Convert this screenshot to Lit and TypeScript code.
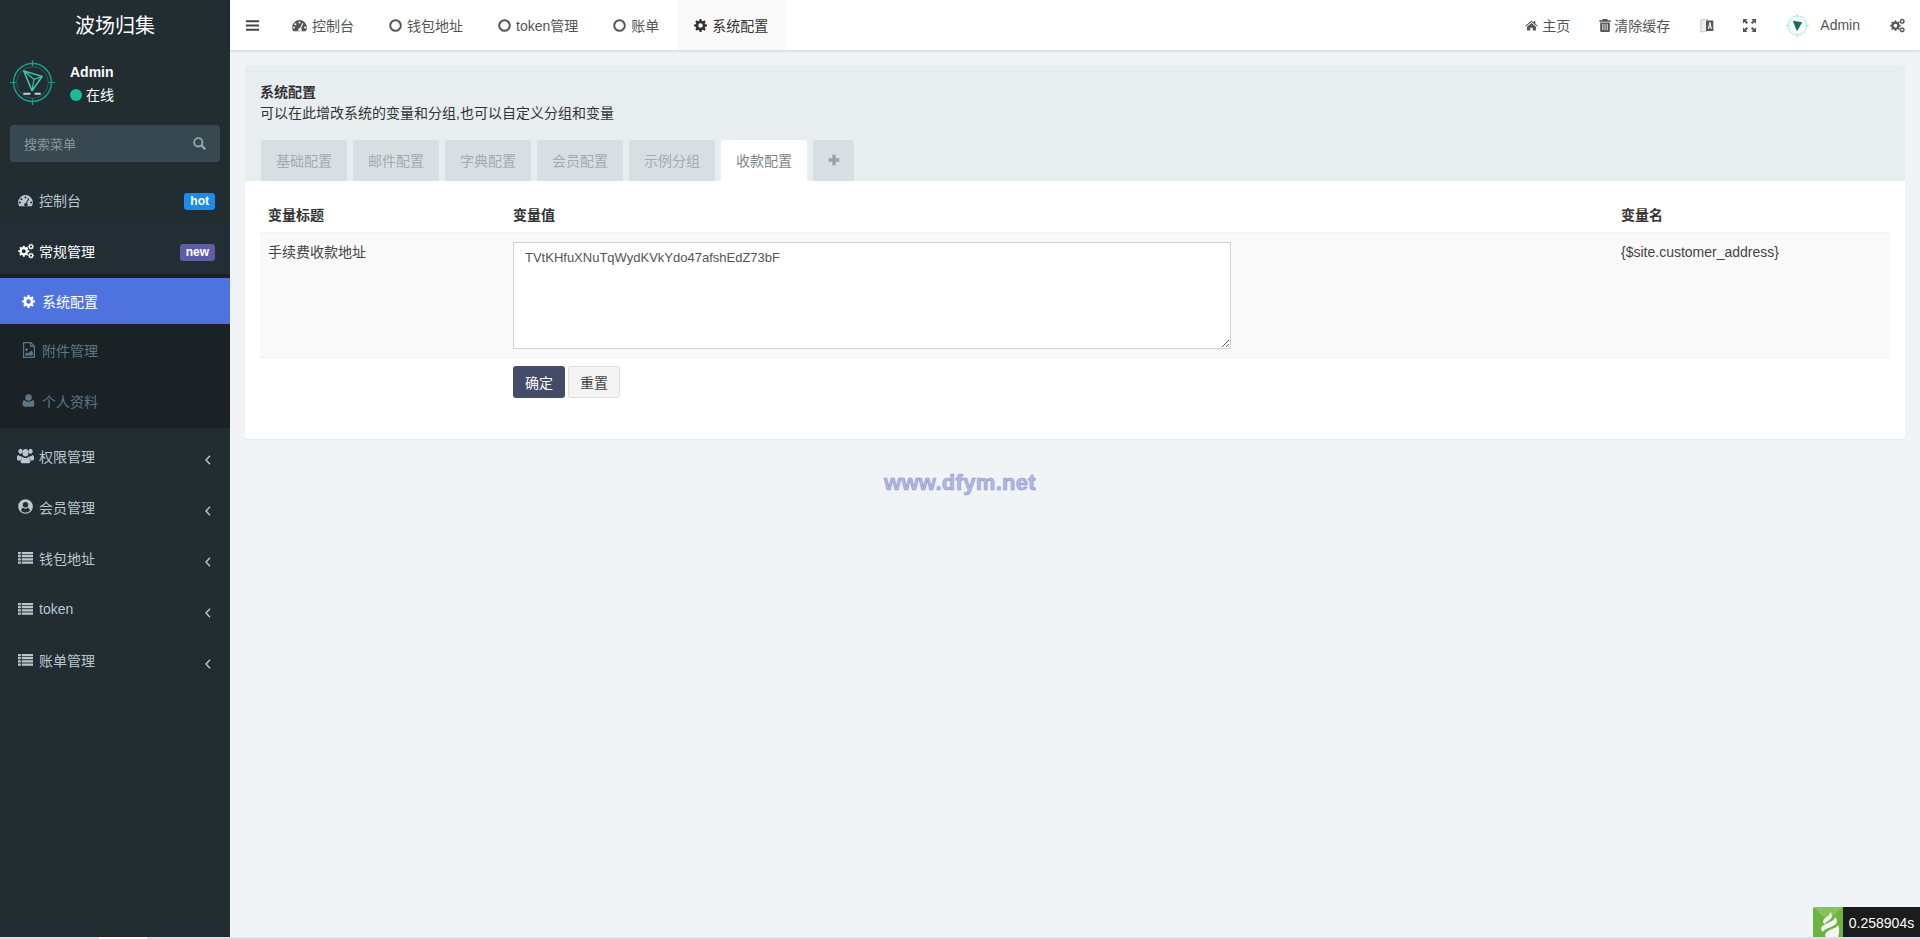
import { LitElement, html, css, svg } from "lit";
import { customElement } from "lit/decorators.js";

function gearPath(cx: number, cy: number, r: number, hole: number, teeth = 8): string {
  const pts: string[] = [];
  const step = (Math.PI * 2) / teeth;
  const inner = r * 0.76;
  for (let i = 0; i < teeth; i++) {
    const a = i * step;
    const w = step * 0.2;
    const seq: [number, number][] = [
      [inner, a - step * 0.32],
      [r, a - w],
      [r, a + w],
      [inner, a + step * 0.32],
    ];
    for (const [rad, an] of seq) {
      pts.push(`${(cx + rad * Math.cos(an)).toFixed(2)} ${(cy + rad * Math.sin(an)).toFixed(2)}`);
    }
  }
  const h = hole;
  return `M${pts.join("L")}Z M${cx - h} ${cy}a${h} ${h} 0 1 0 ${2 * h} 0a${h} ${h} 0 1 0 ${-2 * h} 0Z`;
}

const ic = (body: unknown, size = 14, vb = "0 0 16 16") =>
  html`<svg class="ic" width=${size} height=${size} viewBox=${vb} fill="currentColor" fill-rule="evenodd">${body}</svg>`;

const dashboard = (s = 15) =>
  ic(svg`<path d="M8 2.2A7.8 7.8 0 0 0 .2 10c0 1.500.4 2.800 1.100 4h13.400c.7-1.200 1.100-2.500 1.100-4A7.800 7.800 0 0 0 8 2.200ZM8 3.700a1.100 1.100 0 1 1 0 2.200 1.100 1.100 0 0 1 0-2.200ZM3.600 5.500a1.100 1.100 0 1 1 0 2.200 1.100 1.100 0 0 1 0-2.200ZM2 9a1.100 1.100 0 1 1 0 2.200A1.100 1.100 0 0 1 2 9ZM14 9a1.100 1.100 0 1 1 0 2.200A1.100 1.100 0 0 1 14 9ZM11 5.300l1 .5-2.300 5.200a1.900 1.900 0 1 1-1.100-.4Z"/>`, s);
const cogs = (s = 16) =>
  ic(svg`<path d=${gearPath(5.8, 8.2, 5.6, 2)}/><path d=${gearPath(13, 3.6, 3, 1.100)}/><path d=${gearPath(13, 12.6, 3, 1.100)}/>`, s);
const gear = (s = 13) => ic(svg`<path d=${gearPath(8, 8, 8, 2.800)}/>`, s);
const fileImg = (s = 16) =>
  ic(svg`<path d="M2 0h8l4 4v12H2ZM3.200 1.200v13.600h9.600V5H9V1.200ZM10.200 1.700V3.800h2.100ZM5.500 6.200a1.400 1.400 0 1 1 0 2.800 1.400 1.400 0 0 1 0-2.800ZM4.200 13.500v-1.700l1.700-1.600 1.300 1.200 3-3 1.600 1.600v3.500Z"/>`, s);
const user = (s = 13) =>
  ic(svg`<circle cx="8" cy="4.200" r="4"/><path d="M2.600 7.500C3.800 8.800 5.800 9.400 8 9.400s4.200-.6 5.400-1.900c1.500.7 1.900 2.800 1.900 5.200 0 1.900-1.200 3.100-2.800 3.100h-9c-1.600 0-2.800-1.200-2.800-3.100 0-2.400.4-4.500 1.900-5.200Z"/>`, s);
const users = () =>
  html`<svg class="ic" width="17" height="16" viewBox="0 1.500 16 12" preserveAspectRatio="none" fill="currentColor" fill-rule="evenodd"><circle cx="3.300" cy="4" r="2"/><circle cx="12.700" cy="4" r="2"/><circle cx="8" cy="5" r="2.800"/><path d="M0 8.700c0-1.200.7-2 1.500-2 .5.600 1.200 1 2.100 1 .3 0 .6 0 .8-.1-.3.900-.5 1.600-.5 3.300H1.200C.5 10.900 0 10.500 0 9.800ZM16 8.700c0-1.200-.7-2-1.500-2-.5.600-1.200 1-2.100 1-.3 0-.6 0-.8-.1.300.9.500 1.600.5 3.300h2.700c.7 0 1.200-.4 1.200-1.100ZM5.100 8c.7.600 1.700 1 2.900 1s2.200-.4 2.900-1c1.200.1 1.700 1.500 1.700 3.200 0 1.200-.7 1.800-1.700 1.800H5.100c-1 0-1.700-.6-1.700-1.800C3.400 9.500 3.900 8.100 5.100 8Z"/></svg>`;
const userCircle = (s = 15) =>
  ic(svg`<path d="M8 .2a7.800 7.800 0 1 1 0 15.600A7.800 7.800 0 0 1 8 .2ZM8 3.300a2.900 2.900 0 1 0 0 5.800 2.900 2.900 0 0 0 0-5.800ZM3.200 12.300c1 1.400 2.900 2.200 4.800 2.200s3.800-.8 4.800-2.200c-.3-1.400-1.200-2.600-2.500-3-.6.600-1.400 1-2.300 1s-1.700-.4-2.300-1c-1.300.4-2.200 1.600-2.500 3Z"/>`, s);
const list = (s = 15) =>
  ic(svg`<path d="M0 2h3v2.400H0ZM4 2h12v2.400H4ZM0 5.400h3v2.400H0ZM4 5.400h12v2.400H4ZM0 8.800h3v2.400H0ZM4 8.800h12v2.400H4ZM0 12.200h3v2.400H0ZM4 12.200h12v2.400H4Z"/>`, s);
const angle = () =>
  html`<svg class="ic chev" width="6" height="10" viewBox="0 0 6 10" fill="none" stroke="currentColor" stroke-width="1.400"><path d="M5 .8 1 5l4 4.200"/></svg>`;
const search = () =>
  html`<svg class="ic" width="13" height="13" viewBox="0 0 13 13" fill="none" stroke="currentColor" stroke-width="1.800"><circle cx="5.300" cy="5.300" r="4.200"/><path d="m8.400 8.400 3.900 3.900" stroke-width="2.200"/></svg>`;
const bars = () =>
  ic(svg`<path d="M1 2.500h14v2H1ZM1 7h14v2H1ZM1 11.500h14v2H1Z"/>`, 15);
const circleO = () =>
  html`<svg class="ic" width="13" height="13" viewBox="0 0 13 13" fill="none" stroke="currentColor" stroke-width="2"><circle cx="6.500" cy="6.500" r="5.300"/></svg>`;
const home = () =>
  ic(svg`<path d="M8 2 .3 8.300l.8 1L8 3.700l6.900 5.600.8-1-3-2.500V2.500h-1.900v1.800ZM8 5 2.500 9.500V14h4v-3.300h3V14h4V9.500Z"/>`, 13);
const trash = () =>
  ic(svg`<path d="M5.500 1h5l.7 1.500H14.500v1.700h-13V2.500h3.300ZM2.500 5h11v9.500c0 .8-.6 1.500-1.300 1.500H3.800c-.7 0-1.300-.7-1.300-1.500ZM5 6.500v7.500h1V6.500ZM7.500 6.500v7.500h1V6.500ZM10 6.500v7.500h1V6.500Z"/>`, 14);
const translate = () =>
  html`<svg class="ic" width="14" height="15" viewBox="0 0 14 15"><path d="M.8 2 7.500 1v12l-6.700 1Z" fill="#ececec" stroke="#b5b5b5" stroke-width=".7"/><path d="M6 2.500h7.300v10.500H6Z" fill="#555"/><path d="M9.500 4 7.900 11h1.100l.3-1.500h1.200l.3 1.500h1.100L10.400 4Zm0 4.500.4-2.300.4 2.300Z" fill="#fff"/></svg>`;
const arrows = () =>
  ic(svg`<path d="M1 1h5L4.300 2.700 6.500 4.900 4.900 6.500 2.700 4.300 1 6ZM15 1v5l-1.700-1.700-2.200 2.200-1.600-1.600 2.200-2.200L10 1ZM1 15v-5l1.700 1.700 2.200-2.200 1.600 1.600-2.200 2.200L6 15ZM15 15h-5l1.700-1.700-2.200-2.200 1.600-1.600 2.200 2.200L15 10Z"/>`, 15);
const plus = () =>
  ic(svg`<path d="M6 2h4v4h4v4h-4v4H6v-4H2V6h4Z"/>`, 14);
const tronLogo = (s: number, ringStroke: string, fill: string, big: boolean) =>
  html`<svg class="ic" width=${s} height=${s} viewBox="0 0 44 44" fill="none">
    <circle cx="22" cy="22" r="18.500" stroke=${ringStroke} stroke-width="1.400"/>
    <circle cx="22" cy="22" r="15.500" stroke=${ringStroke} stroke-width=".7" opacity=".7"/>
    <path d="M22 0v6M22 38v6M0 22h6M38 22h6" stroke=${ringStroke} stroke-width="1.200"/>
    ${big
      ? svg`<path d="M13.500 10.700 31.500 16 21.500 30Z" stroke="#3ccbb2" stroke-width="1.500" stroke-linejoin="round"/><path d="M13.500 10.700 23.500 19 31.500 16M23.500 19l-2 11" stroke="#3ccbb2" stroke-width="1.100"/><path d="M13 33h7M24 33h6" stroke="#bcd6d4" stroke-width="1.800"/>`
      : svg`<path d="M13 13 31 16 21 33Z" fill=${fill}/>`}
  </svg>`;

@customElement("app-root")
export class AppRoot extends LitElement {
  static styles = css`
    :host {
      display: block;
      height: 939px;
      overflow: hidden;
      position: relative;
      font-family: "Liberation Sans", "Noto Sans CJK SC", sans-serif;
      font-size: 14px;
      color: #333;
    }
    * { box-sizing: border-box; }
    .ic { display: block; flex: none; }
    .app { display: flex; height: 939px; background: #f1f4f6; }

    .side { width: 230px; flex: none; background: #222d32; color: #b8c7ce; font-size: 14px; }
    .brand { height: 50px; display: flex; align-items: center; justify-content: center; color: #fff; font-size: 20px; padding-bottom: 2px; }
    .userp { height: 75px; display: flex; padding: 7px 0 0 10px; gap: 15px; }
    .userp .av { padding-top: 3px; }
    .uname { color: #fff; font-weight: 700; font-size: 14px; line-height: 16px; margin-top: 7px; }
    .ustat { color: #fff; font-size: 14px; line-height: 16px; margin-top: 7px; display: flex; align-items: center; gap: 4px; }
    .dot { width: 12px; height: 12px; border-radius: 50%; background: #1abc9c; }
    .search {
      margin: 0 10px; height: 37px; background: #374850; border-radius: 3px;
      display: flex; align-items: center; justify-content: space-between;
      padding: 0 14px 1px 14px; color: #8a979d; font-size: 13px;
    }
    .search .ic { color: #9aa7ad; }
    .menu { margin-top: 13px; }
    .row { height: 51px; display: flex; align-items: center; padding-left: 18px; gap: 6px; }
    .row .iw { width: 15px; display: flex; justify-content: center; }
    .row .lb { flex: 1; }
    .row.open { color: #fff; height: 49px; padding-top: 3px; background: #232e34; }
    .row.first { height: 50px; }
    .row.after { padding-top: 2px; height: 53px; }
    .tag {
      margin: 3px 15px 0 0; color: #fff; font-weight: 700; font-size: 12px; line-height: 12px;
      padding: 2px 6px 3px; border-radius: 3px;
    }
    .tag.blue { background: #1b8bf0; }
    .tag.purple { background: #605ca8; }
    .chev { margin: 9px 19px 0 0; color: #b8c7ce; }
    .sub { background: #1a2226; padding-top: 4px; height: 154px; }
    .sitem { height: 51px; display: flex; align-items: center; padding-left: 22px; gap: 7px; color: #5d7785; font-size: 14px; }
    .sitem .iw { width: 13px; display: flex; justify-content: center; }
    .sitem.active { height: 46px; background: #4e73df; color: #fff; }

    .main { flex: 1; min-width: 0; display: flex; flex-direction: column; }
    .top {
      height: 50px; flex: none; background: #fff; box-shadow: 0 1px 3px rgba(0, 0, 0, .14);
      display: flex; align-items: stretch; color: #555; font-size: 14px;
    }
    .burger { width: 45px; display: flex; align-items: center; justify-content: center; color: #444; }
    .tabs { display: flex; }
    .tab { display: flex; align-items: center; gap: 5px; padding: 0 18px 0 17px; }
    .tab.on { background: #f9f9f9; color: #333; }
    .spacer { flex: 1; }
    .right { display: flex; align-items: center; color: #555; }
    .ritem { display: flex; align-items: center; gap: 4px; margin-right: 30px; }
    .ritem.hm { margin-right: 28px; }
    .ritem.tr { margin-right: 28px; }
    .ritem.ar { margin-right: 29px; }
    .ritem.tight { gap: 2px; }
    .ritem.who { gap: 11px; }
    .ritem.last { margin-right: 15px; }

    .content { padding: 15px; }
    .panel { background: #fff; border-radius: 3px; box-shadow: 0 1px 1px rgba(0, 0, 0, .05); height: 374px; overflow: hidden; }
    .phead { height: 116px; background: #e8edf0; padding: 15px 15px 0; }
    .ptitle { font-weight: 700; font-size: 14px; line-height: 18px; color: #333; padding-top: 3px; }
    .pdesc { font-size: 14px; line-height: 20px; color: #333; margin-top: 2px; }
    .ptabs { display: flex; gap: 6px; margin-top: 17px; padding-left: 1px; }
    .ptab {
      height: 41px; padding: 0 15px 2px; display: flex; align-items: center; background: #d8dfe3;
      color: #a3abb0; font-size: 14px; border-radius: 3px 3px 0 0;
    }
    .ptab.on { background: #fff; color: #7b878d; }
    .ptab.plus { width: 41px; padding: 0 0 2px; justify-content: center; color: #98a5ab; }
    .pbody { padding: 15px 15px; }
    .grid { display: grid; grid-template-columns: 245px 1108px 1fr; }
    .hd { height: 38px; display: flex; align-items: center; font-weight: 700; font-size: 14px; color: #333; padding: 0 8px; border-bottom: 2px solid #f4f4f4; }
    .cell { background: #f9f9f9; height: 124px; padding: 9px 8px 8px; border-bottom: 1px solid #f0f0f0; font-size: 14px; line-height: 18px; color: #444; }
    .cell.v { padding: 8px 8px 0; }
    .ta {
      display: block; width: 718px; height: 107px; border: 1px solid #d2d2dc; background: #fff;
      padding: 6px 11px; color: #555; font: 13px/18px "Liberation Sans", sans-serif; border-radius: 0; margin: 0; resize: vertical; outline: none;
    }
    .acts { grid-column: 2; padding: 8px 8px 0; display: flex; gap: 3px; }
    .btn { height: 32px; padding: 0 12px 1px; border-radius: 3px; display: flex; align-items: center; font-size: 14px; }
    .btn.pri { background: #444c69; color: #fff; }
    .btn.def { background: #f4f4f4; border: 1px solid #ddd; color: #444; padding: 0 11px 1px; }
    .mark {
      position: absolute; left: 0; right: 0; top: 470px; text-align: center;
      font-weight: 700; font-size: 22px; line-height: 26px; letter-spacing: .3px;
      color: #b3b8e6; -webkit-text-stroke: .6px #8e94c8;
    }
    .trace { position: absolute; right: 0; bottom: 0; height: 32px; display: flex; }
    .tlogo { width: 30px; background: #6cb33f; border-radius: 2px 0 0 0; overflow: hidden; }
    .ttime { width: 77px; background: #1c1c1c; color: #fff; font-size: 14px; display: flex; align-items: center; justify-content: center; }
    .line { position: absolute; left: 0; right: 0; bottom: 0; height: 2px; background: #cfe3ea; }
    .gap { position: absolute; left: 99px; width: 48px; top: 0; bottom: 0; background: #fff; }
  `;

  render() {
    return html`
      <div class="app">
        <aside class="side">
          <div class="brand">波场归集</div>
          <div class="userp">
            <div class="av">${tronLogo(45, "#1f9c8c", "#1abc9c", true)}</div>
            <div>
              <div class="uname">Admin</div>
              <div class="ustat"><span class="dot"></span>在线</div>
            </div>
          </div>
          <div class="search"><span>搜索菜单</span>${search()}</div>
          <div class="menu">
            <div class="row first"><span class="iw">${dashboard()}</span><span class="lb">控制台</span><span class="tag blue">hot</span></div>
            <div class="row open"><span class="iw">${cogs()}</span><span class="lb">常规管理</span><span class="tag purple">new</span></div>
            <div class="sub">
              <div class="sitem active"><span class="iw">${gear()}</span>系统配置</div>
              <div class="sitem"><span class="iw">${fileImg()}</span>附件管理</div>
              <div class="sitem"><span class="iw">${user()}</span>个人资料</div>
            </div>
            <div class="row after"><span class="iw">${users()}</span><span class="lb">权限管理</span>${angle()}</div>
            <div class="row"><span class="iw">${userCircle()}</span><span class="lb">会员管理</span>${angle()}</div>
            <div class="row"><span class="iw">${list()}</span><span class="lb">钱包地址</span>${angle()}</div>
            <div class="row"><span class="iw">${list()}</span><span class="lb">token</span>${angle()}</div>
            <div class="row"><span class="iw">${list()}</span><span class="lb">账单管理</span>${angle()}</div>
          </div>
        </aside>
        <div class="main">
          <header class="top">
            <div class="burger">${bars()}</div>
            <div class="tabs">
              <div class="tab">${dashboard(15)}控制台</div>
              <div class="tab">${circleO()}钱包地址</div>
              <div class="tab">${circleO()}token管理</div>
              <div class="tab">${circleO()}账单</div>
              <div class="tab on">${gear(13)}系统配置</div>
            </div>
            <div class="spacer"></div>
            <div class="right">
              <div class="ritem hm">${home()}主页</div>
              <div class="ritem tight">${trash()}清除缓存</div>
              <div class="ritem tr">${translate()}</div>
              <div class="ritem ar">${arrows()}</div>
              <div class="ritem who">${tronLogo(23, "#7fe3d6", "#0f6f62", false)}Admin</div>
              <div class="ritem last">${cogs(15)}</div>
            </div>
          </header>
          <main class="content">
            <section class="panel">
              <div class="phead">
                <div class="ptitle">系统配置</div>
                <div class="pdesc">可以在此增改系统的变量和分组,也可以自定义分组和变量</div>
                <div class="ptabs">
                  <div class="ptab">基础配置</div>
                  <div class="ptab">邮件配置</div>
                  <div class="ptab">字典配置</div>
                  <div class="ptab">会员配置</div>
                  <div class="ptab">示例分组</div>
                  <div class="ptab on">收款配置</div>
                  <div class="ptab plus">${plus()}</div>
                </div>
              </div>
              <div class="pbody">
                <div class="grid">
                  <div class="hd">变量标题</div>
                  <div class="hd">变量值</div>
                  <div class="hd">变量名</div>
                  <div class="cell">手续费收款地址</div>
                  <div class="cell v"><textarea class="ta" .value=${"TVtKHfuXNuTqWydKVkYdo47afshEdZ73bF"}></textarea></div>
                  <div class="cell">{$site.customer_address}</div>
                  <div class="acts"><div class="btn pri">确定</div><div class="btn def">重置</div></div>
                </div>
              </div>
            </section>
          </main>
        </div>
      </div>
      <div class="mark">www.dfym.net</div>
      <div class="trace">
        <div class="tlogo">
          <svg class="ic" width="30" height="32" viewBox="0 0 30 32">
            <path d="M0 0h30L15 14Z" fill="#86c45a"/>
            <path d="M17 5C18 9 11 10 10 14c0 2 1 3 2 3 1-3 7-4 7-8 0-2-1-3-2-4Z" fill="#eef5e8"/>
            <path d="M22 10c0 5-12 6-14 11 0 2 1 3 2 4 1-4 14-5 14-11 0-2-1-3-2-4Z" fill="#f4f8f0"/>
            <path d="M25 18c-1 4-12 4-13 10l1 3h12c1-4 2-9 0-13Z" fill="#f4f8f0"/>
          </svg>
        </div>
        <div class="ttime">0.258904s</div>
      </div>
      <div class="line"><div class="gap"></div></div>
    `;
  }
}
